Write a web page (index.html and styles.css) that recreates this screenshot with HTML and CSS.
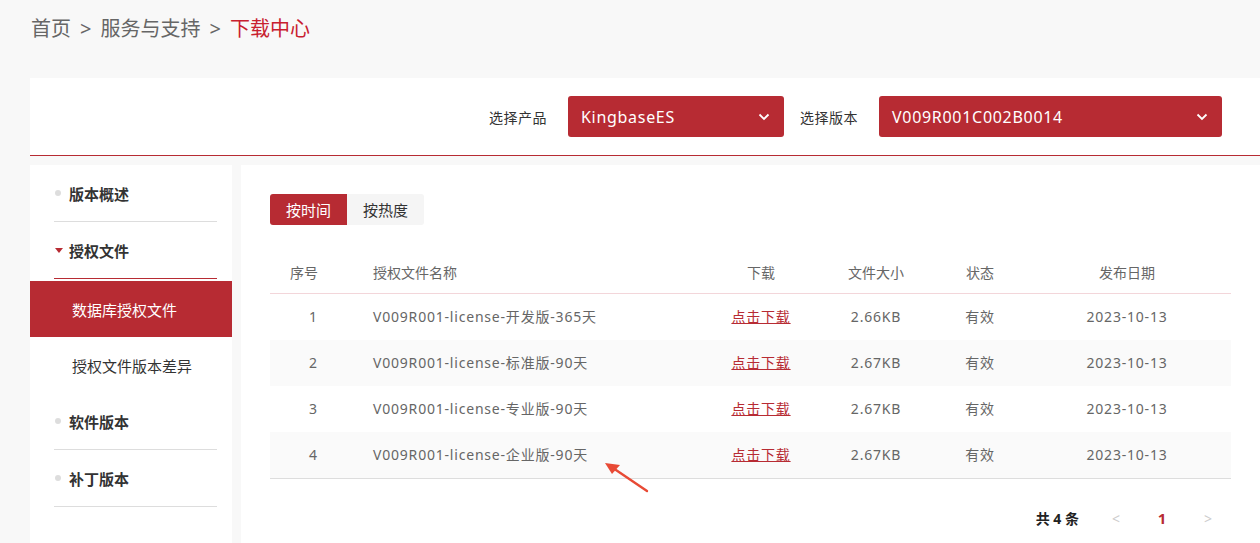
FILE: index.html
```html
<!DOCTYPE html>
<html lang="zh-CN">
<head>
    <meta charset="UTF-8">
    <title>下载中心</title>
    <link rel="stylesheet" href="styles.css">
</head>
<body>
    <!-- breadcrumb -->
    <div class="crumbs">首页<span class="sep">&gt;</span>服务与支持<span class="sep">&gt;</span><span class="current">下载中心</span></div>

    <div class="wrap">
        <div class="filter">
            <span class="label">选择产品</span>
            <div class="select product">
                <span>KingbaseES</span>
                <svg class="chev" width="12" height="8" viewBox="0 0 12 8"><polyline points="1.5,1.5 6,6 10.5,1.5" fill="none" stroke="#fff" stroke-width="1.8"/></svg>
            </div>
            <span class="label">选择版本</span>
            <div class="select version">
                <span>V009R001C002B0014</span>
                <svg class="chev" width="12" height="8" viewBox="0 0 12 8"><polyline points="1.5,1.5 6,6 10.5,1.5" fill="none" stroke="#fff" stroke-width="1.8"/></svg>
            </div>
        </div>

        <div class="body">
            <ul class="side">
                <li class="group"><i class="dot"></i>版本概述</li>
                <li class="group open"><i class="tri"></i>授权文件</li>
                <li class="sub active">数据库授权文件</li>
                <li class="sub">授权文件版本差异</li>
                <li class="group"><i class="dot"></i>软件版本</li>
                <li class="group"><i class="dot"></i>补丁版本</li>
            </ul>

            <div class="main">
                <div class="tabs">
                    <button class="tab on">按时间</button>
                    <button class="tab">按热度</button>
                </div>

                <table class="list">
                    <colgroup>
                        <col style="width:103px">
                        <col style="width:328px">
                        <col style="width:120px">
                        <col style="width:110px">
                        <col style="width:98px">
                        <col>
                    </colgroup>
                    <thead>
                        <tr>
                            <th class="num">序号</th>
                            <th class="name">授权文件名称</th>
                            <th>下载</th>
                            <th>文件大小</th>
                            <th>状态</th>
                            <th class="date">发布日期</th>
                        </tr>
                    </thead>
                    <tbody>
                        <tr>
                            <td class="num">1</td>
                            <td class="name">V009R001-license-开发版-365天</td>
                            <td><a href="#">点击下载</a></td>
                            <td>2.66KB</td>
                            <td>有效</td>
                            <td class="date">2023-10-13</td>
                        </tr>
                        <tr>
                            <td class="num">2</td>
                            <td class="name">V009R001-license-标准版-90天</td>
                            <td><a href="#">点击下载</a></td>
                            <td>2.67KB</td>
                            <td>有效</td>
                            <td class="date">2023-10-13</td>
                        </tr>
                        <tr>
                            <td class="num">3</td>
                            <td class="name">V009R001-license-专业版-90天</td>
                            <td><a href="#">点击下载</a></td>
                            <td>2.67KB</td>
                            <td>有效</td>
                            <td class="date">2023-10-13</td>
                        </tr>
                        <tr>
                            <td class="num">4</td>
                            <td class="name">V009R001-license-企业版-90天</td>
                            <td><a href="#">点击下载</a></td>
                            <td>2.67KB</td>
                            <td>有效</td>
                            <td class="date">2023-10-13</td>
                        </tr>
                    </tbody>
                </table>

                <div class="pager">
                    <span class="total">共 4 条</span>
                    <span class="pg off">&lt;</span>
                    <span class="pg cur">1</span>
                    <span class="pg off">&gt;</span>
                </div>
            </div>
        </div>
    </div>

    <!-- annotation arrow over the table -->
    <svg class="mark" width="60" height="40" viewBox="0 0 60 40">
        <line x1="46" y1="33" x2="12" y2="10" stroke="#e84a35" stroke-width="2.4" stroke-linecap="round"/>
        <polygon points="4,5 19,7 11,16" fill="#e84a35"/>
    </svg>
</body>
</html>
```

FILE: styles.css
```css
body {
    margin: 0;
    background: #f8f8f8;
    font-family: "Noto Sans", "Noto Sans CJK SC", sans-serif;
    color: #666;
    position: relative;
    overflow: hidden;
}

.crumbs {
    height: 78px;
    box-sizing: border-box;
    padding: 14px 31px 0;
    font-size: 20px;
    line-height: 30px;
    color: #666;
}

.crumbs .sep {
    margin: 0 9px;
}

.crumbs .current {
    color: #c8202f;
}

.wrap {
    margin-left: 30px;
}

/* верхняя панель выбора */
.filter {
    height: 77px;
    background: #fff;
    border-bottom: 1px solid #b72b33;
    display: flex;
    align-items: center;
    justify-content: flex-end;
    padding-right: 38px;
}

.label {
    font-size: 14px;
    letter-spacing: 0.5px;
    color: #333;
    margin-right: 21px;
}

.select {
    height: 41px;
    box-sizing: border-box;
    background: #b72b33;
    border-radius: 3px;
    color: #fff;
    font-size: 16px;
    letter-spacing: 0.7px;
    display: flex;
    align-items: center;
    justify-content: space-between;
    padding: 0 14px 0 13px;
}

.select.product {
    width: 216px;
    margin-right: 16px;
}

.select.version {
    width: 343px;
}

.body {
    display: flex;
    gap: 9px;
    margin-top: 9px;
}

/* боковое меню */
.side {
    width: 202px;
    min-height: 380px;
    background: #fff;
    list-style: none;
    margin: 0;
    padding: 0;
}

.group {
    margin: 0 15px 0 24px;
    height: 56px;
    border-bottom: 1px solid #ddd;
    display: flex;
    align-items: center;
    font-size: 15px;
    font-weight: bold;
    color: #333;
}

.group.open {
    border-bottom-color: #b72b33;
    margin-bottom: 2px;
}

.dot {
    width: 6px;
    height: 6px;
    border-radius: 50%;
    background: #ddd;
    margin: 0 8px 0 1px;
}

.tri {
    width: 0;
    height: 0;
    border-left: 4px solid transparent;
    border-right: 4px solid transparent;
    border-top: 5px solid #b72b33;
    margin: 0 6px 0 1px;
}

.sub {
    height: 56px;
    display: flex;
    align-items: center;
    padding-left: 42px;
    font-size: 15px;
    color: #333;
}

.sub.active {
    background: #b72b33;
    color: #fff;
}

/* основная часть */
.main {
    flex: 1;
    background: #fff;
    padding: 29px 29px 0;
    min-height: 380px;
}

.tabs {
    display: flex;
}

.tab {
    width: 77px;
    height: 31px;
    border: none;
    background: #f5f5f5;
    font-family: inherit;
    font-size: 15px;
    color: #333;
    padding: 0;
}

.tab.on {
    background: #b72b33;
    color: #fff;
    border-radius: 3px 0 0 3px;
}

.tab:last-child {
    border-radius: 0 3px 3px 0;
}

.list {
    width: 100%;
    margin-top: 27px;
    border-collapse: collapse;
    table-layout: fixed;
    font-size: 14px;
    line-height: 20px;
}

.list th {
    height: 41px;
    padding: 0;
    font-weight: normal;
    color: #666;
    border-bottom: 1px solid #f3d6da;
    text-align: center;
}

.list td {
    height: 46px;
    padding: 0;
    text-align: center;
    color: #666;
    letter-spacing: 0.8px;
}

.list tbody tr:nth-child(even) td {
    background: #fafafa;
}

.list tbody tr:last-child td {
    border-bottom: 1px solid #ddd;
}

.list .num {
    text-align: left;
}

.list th.num {
    padding-left: 20px;
}

.list td.num {
    padding-left: 39px;
}

.list .name {
    text-align: left;
}

.list .date {
    padding-right: 6px;
}

.list a {
    color: #b72b33;
    text-decoration: underline;
}

.pager {
    display: flex;
    justify-content: flex-end;
    align-items: center;
    height: 78px;
    font-size: 14px;
}

.total {
    font-weight: bold;
    color: #222;
    margin-right: 14px;
}

.pg {
    width: 46px;
    text-align: center;
}

.pg.off {
    color: #ccc;
}

.pg.cur {
    color: #b72b33;
    font-weight: bold;
    font-size: 15px;
}

.mark {
    position: absolute;
    left: 601px;
    top: 458px;
}
```
